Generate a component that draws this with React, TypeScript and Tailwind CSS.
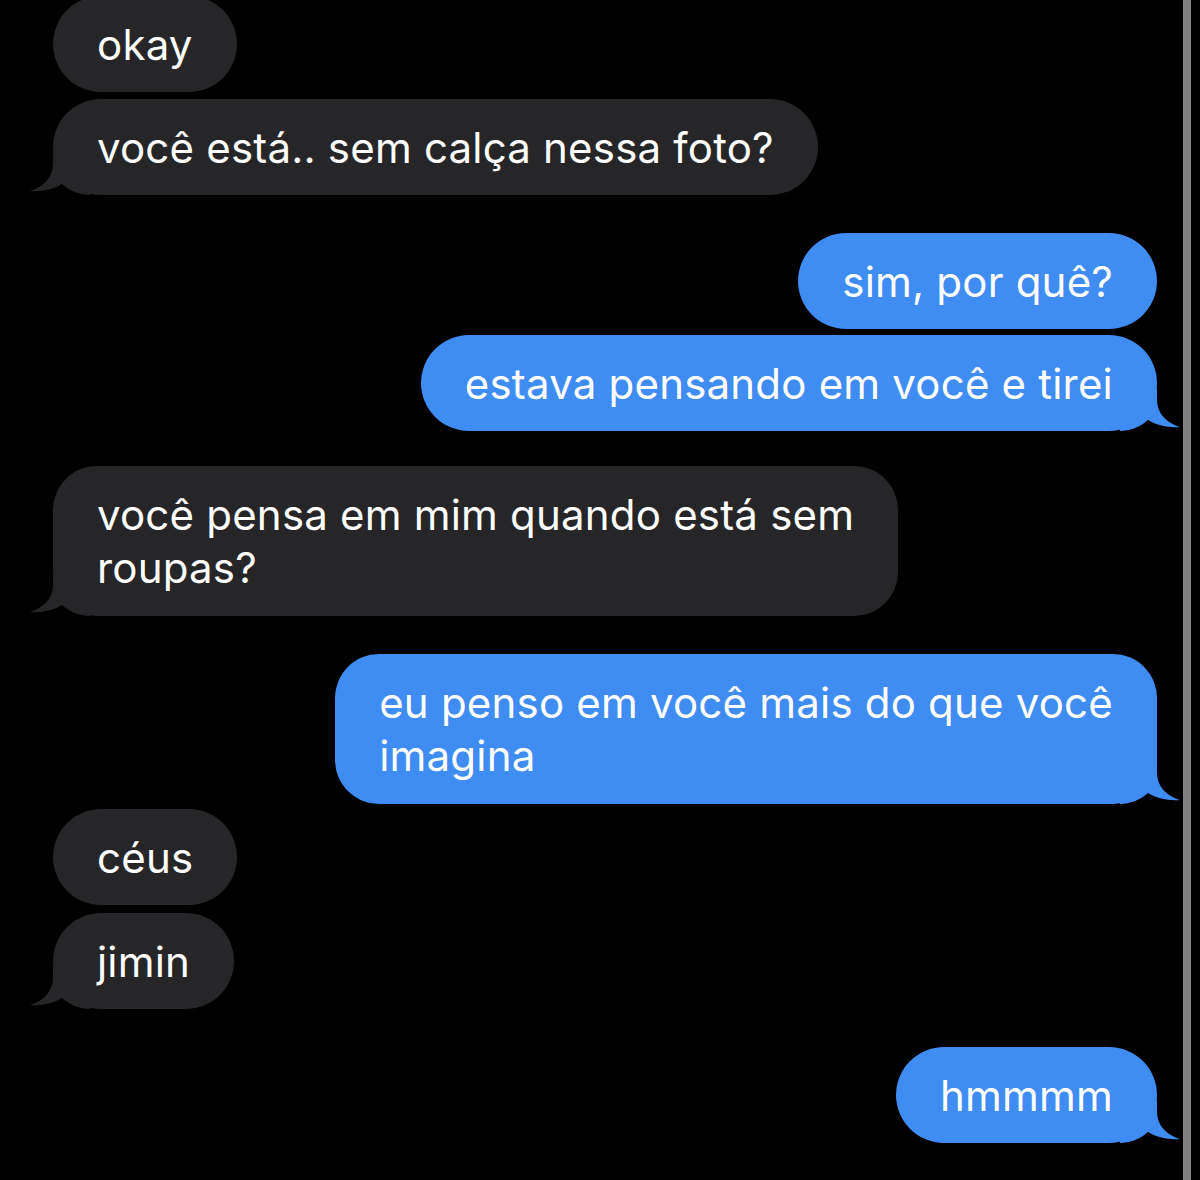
import React from "react";

const DARK = "#262628";
const BLUE = "#3f8cf2";

function Tail({ side, color }: { side: "left" | "right"; color: string }) {
  return (
    <svg
      width="60"
      height="50"
      viewBox="0 0 60 50"
      className={
        side === "left"
          ? "absolute left-[-23px] bottom-0"
          : "absolute right-[-23px] bottom-0 scale-x-[-1]"
      }
    >
      <path
        d="M23 8 L23 18 C23 33 13 42 0 46 C12 47 24 44 32 39 C40 46 50 50 60 50 L60 8 Z"
        fill={color}
      />
    </svg>
  );
}

type Msg = {
  text: React.ReactNode;
  me: boolean;
  tail?: boolean;
  mt: string;
  two?: boolean;
};

const msgs: Msg[] = [
  { text: "okay", me: false, mt: "mt-[-4px]" },
  { text: "você está.. sem calça nessa foto?", me: false, tail: true, mt: "mt-[7px]" },
  { text: "sim, por quê?", me: true, mt: "mt-[38px]" },
  { text: "estava pensando em você e tirei", me: true, tail: true, mt: "mt-[6px]" },
  {
    text: (
      <>
        você pensa em mim quando está sem
        <br />
        roupas?
      </>
    ),
    me: false,
    tail: true,
    two: true,
    mt: "mt-[35px]",
  },
  {
    text: (
      <>
        eu penso em você mais do que você
        <br />
        imagina
      </>
    ),
    me: true,
    tail: true,
    two: true,
    mt: "mt-[38px]",
  },
  { text: "céus", me: false, mt: "mt-[5px]" },
  { text: "jimin", me: false, tail: true, mt: "mt-[8px]" },
  { text: "hmmmm", me: true, tail: true, mt: "mt-[38px]" },
];

export default function App() {
  return (
    <div
      className="w-[1200px] h-[1180px] bg-black overflow-hidden flex"
      style={{ fontFamily: "Inter, 'Open Sans', sans-serif" }}
    >
      <div className="w-[1183px] flex flex-col pl-[53px] pr-[26px]">
        {msgs.map((m, i) => {
          const color = m.me ? BLUE : DARK;
          return (
            <div
              key={i}
              className={`relative ${m.mt} ${m.me ? "self-end" : "self-start"}`}
            >
              {m.tail && <Tail side={m.me ? "right" : "left"} color={color} />}
              <div
                className={`relative whitespace-nowrap text-white text-[42px] leading-[53px] tracking-[0.2px] px-[44px] ${
                  m.two ? "py-[22px] rounded-[44px]" : "h-[96px] flex items-center rounded-[48px]"
                } ${m.me ? "bg-[#3f8cf2]" : "bg-[#262628]"}`}
              >
                {m.text}
              </div>
            </div>
          );
        })}
      </div>
      <div className="w-[8px] h-full bg-[#808080]" />
      <div className="flex-1 h-full bg-black" />
    </div>
  );
}
